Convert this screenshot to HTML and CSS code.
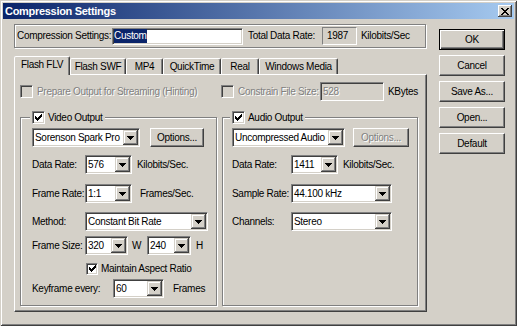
FILE: index.html
```html
<!DOCTYPE html>
<html>
<head>
<meta charset="utf-8">
<title>Compression Settings</title>
<link rel="stylesheet" href="styles.css">
</head>
<body>
<div class="window">
  <div class="titlebar">
    <span class="title">Compression Settings</span>
    <span class="close"><svg width="8" height="7" viewBox="0 0 8 7" shape-rendering="crispEdges"><path fill="#000" d="M0 0h2v1H0zM6 0h2v1H6zM1 1h2v1H1zM5 1h2v1H5zM2 2h4v1H2zM3 3h2v1H3zM2 4h4v1H2zM1 5h2v1H1zM5 5h2v1H5zM0 6h2v1H0zM6 6h2v1H6z"/></svg></span>
  </div>
  <div class="client">
    <div class="main">
      <div class="topbox">
        <span class="lbl-name">Compression Settings:</span>
        <span class="field field-name"><span class="sel">Custom</span></span>
        <span class="lbl-total">Total Data Rate:</span>
        <span class="static">1987</span>
        <span class="lbl-kbps">Kilobits/Sec</span>
      </div>
      <div class="tabs">
        <div class="tab active t-flv">Flash FLV</div>
        <div class="tab t-swf">Flash SWF</div>
        <div class="tab t-mp4">MP4</div>
        <div class="tab t-qt">QuickTime</div>
        <div class="tab t-real">Real</div>
        <div class="tab t-wm">Windows Media</div>
      </div>
      <div class="panel">
        <div class="row1">
          <div class="check disabled opt-stream"><span class="box"></span><span>Prepare Output for Streaming (Hinting)</span></div>
          <div class="check disabled"><span class="box"></span><span class="w-constrain">Constrain File Size:</span></div>
          <span class="field field-size disabled">528</span>
          <span class="lbl-kbytes">KBytes</span>
        </div>
        <div class="groups">
          <fieldset class="group group-video">
            <legend><span class="box"><svg width="7" height="7" viewBox="0 0 7 7" shape-rendering="crispEdges"><path fill="#000" d="M6 0h1v3H6zM5 1h1v3H5zM0 2h1v3H0zM4 2h1v3H4zM1 3h1v3H1zM3 3h1v3H3zM2 4h1v3H2z"/></svg></span><span>Video Output</span></legend>
            <div class="frow">
              <div class="combo w108"><span class="combo-text">Sorenson Spark Pro</span><span class="drop"><svg width="7" height="4" viewBox="0 0 7 4" shape-rendering="crispEdges"><path fill="#000" d="M0 0h7v1H0zM1 1h5v1H1zM2 2h3v1H2zM3 3h1v1H3z"/></svg></span></div>
              <div class="btn btn-opt ml10">Options...</div>
            </div>
            <div class="frow mt8">
              <span class="flabel">Data Rate:</span>
              <div class="combo w47"><span class="combo-text">576</span><span class="drop"><svg width="7" height="4" viewBox="0 0 7 4" shape-rendering="crispEdges"><path fill="#000" d="M0 0h7v1H0zM1 1h5v1H1zM2 2h3v1H2zM3 3h1v1H3z"/></svg></span></div>
              <span class="ml5">Kilobits/Sec.</span>
            </div>
            <div class="frow mt10">
              <span class="flabel">Frame Rate:</span>
              <div class="combo w47"><span class="combo-text">1:1</span><span class="drop"><svg width="7" height="4" viewBox="0 0 7 4" shape-rendering="crispEdges"><path fill="#000" d="M0 0h7v1H0zM1 1h5v1H1zM2 2h3v1H2zM3 3h1v1H3z"/></svg></span></div>
              <span class="ml8">Frames/Sec.</span>
            </div>
            <div class="frow mt9">
              <span class="flabel">Method:</span>
              <div class="combo w123"><span class="combo-text">Constant Bit Rate</span><span class="drop"><svg width="7" height="4" viewBox="0 0 7 4" shape-rendering="crispEdges"><path fill="#000" d="M0 0h7v1H0zM1 1h5v1H1zM2 2h3v1H2zM3 3h1v1H3z"/></svg></span></div>
            </div>
            <div class="frow mt5">
              <span class="flabel">Frame Size:</span>
              <div class="combo w43"><span class="combo-text">320</span><span class="drop"><svg width="7" height="4" viewBox="0 0 7 4" shape-rendering="crispEdges"><path fill="#000" d="M0 0h7v1H0zM1 1h5v1H1zM2 2h3v1H2zM3 3h1v1H3z"/></svg></span></div>
              <span class="unit-w">W</span>
              <div class="combo w44"><span class="combo-text">240</span><span class="drop"><svg width="7" height="4" viewBox="0 0 7 4" shape-rendering="crispEdges"><path fill="#000" d="M0 0h7v1H0zM1 1h5v1H1zM2 2h3v1H2zM3 3h1v1H3z"/></svg></span></div>
              <span class="ml5">H</span>
            </div>
            <div class="frow frow-check mt7">
              <div class="check check-small"><span class="box"><svg width="7" height="7" viewBox="0 0 7 7" shape-rendering="crispEdges"><path fill="#000" d="M6 0h1v3H6zM5 1h1v3H5zM0 2h1v3H0zM4 2h1v3H4zM1 3h1v3H1zM3 3h1v3H3zM2 4h1v3H2z"/></svg></span><span>Maintain Aspect Ratio</span></div>
            </div>
            <div class="frow mt4">
              <span class="flabel flabel-key">Keyframe every:</span>
              <div class="combo w51"><span class="combo-text">60</span><span class="drop"><svg width="7" height="4" viewBox="0 0 7 4" shape-rendering="crispEdges"><path fill="#000" d="M0 0h7v1H0zM1 1h5v1H1zM2 2h3v1H2zM3 3h1v1H3z"/></svg></span></div>
              <span class="ml9">Frames</span>
            </div>
          </fieldset>
          <fieldset class="group group-audio">
            <legend><span class="box"><svg width="7" height="7" viewBox="0 0 7 7" shape-rendering="crispEdges"><path fill="#000" d="M6 0h1v3H6zM5 1h1v3H5zM0 2h1v3H0zM4 2h1v3H4zM1 3h1v3H1zM3 3h1v3H3zM2 4h1v3H2z"/></svg></span><span>Audio Output</span></legend>
            <div class="frow">
              <div class="combo w113"><span class="combo-text">Uncompressed Audio</span><span class="drop"><svg width="7" height="4" viewBox="0 0 7 4" shape-rendering="crispEdges"><path fill="#000" d="M0 0h7v1H0zM1 1h5v1H1zM2 2h3v1H2zM3 3h1v1H3z"/></svg></span></div>
              <div class="btn btn-opt btn-opt-audio disabled ml8">Options...</div>
            </div>
            <div class="frow mt8">
              <span class="flabel flabel-audio">Data Rate:</span>
              <div class="combo w47"><span class="combo-text">1411</span><span class="drop"><svg width="7" height="4" viewBox="0 0 7 4" shape-rendering="crispEdges"><path fill="#000" d="M0 0h7v1H0zM1 1h5v1H1zM2 2h3v1H2zM3 3h1v1H3z"/></svg></span></div>
              <span class="ml5">Kilobits/Sec.</span>
            </div>
            <div class="frow mt10">
              <span class="flabel flabel-audio">Sample Rate:</span>
              <div class="combo w101"><span class="combo-text">44.100 kHz</span><span class="drop"><svg width="7" height="4" viewBox="0 0 7 4" shape-rendering="crispEdges"><path fill="#000" d="M0 0h7v1H0zM1 1h5v1H1zM2 2h3v1H2zM3 3h1v1H3z"/></svg></span></div>
            </div>
            <div class="frow mt9">
              <span class="flabel flabel-audio">Channels:</span>
              <div class="combo w101"><span class="combo-text">Stereo</span><span class="drop"><svg width="7" height="4" viewBox="0 0 7 4" shape-rendering="crispEdges"><path fill="#000" d="M0 0h7v1H0zM1 1h5v1H1zM2 2h3v1H2zM3 3h1v1H3z"/></svg></span></div>
            </div>
          </fieldset>
        </div>
      </div>
    </div>
    <div class="buttons">
      <div class="btn btn-default">OK</div>
      <div class="btn">Cancel</div>
      <div class="btn">Save As...</div>
      <div class="btn">Open...</div>
      <div class="btn">Default</div>
    </div>
  </div>
</div>
</body>
</html>
```

FILE: styles.css
```css
* { box-sizing: border-box; }
html, body { margin: 0; padding: 0; }
body {
  font: 10px/1 "Liberation Sans", Arial, sans-serif;
  letter-spacing: -0.3px;
  color: #000;
  background: #d4d0c8;
}

.window {
  width: 517px;
  height: 326px;
  padding: 3px;
  background: #d4d0c8;
  box-shadow: inset 1px 1px #d4d0c8, inset -1px -1px #404040, inset 2px 2px #fff, inset -2px -2px #808080;
}

.titlebar {
  height: 16px;
  display: flex;
  align-items: center;
  justify-content: space-between;
  padding: 0 2px;
  background: linear-gradient(to right, #0a246a, #a6caf0);
}
.title {
  color: #fff;
  font-weight: bold;
  font-size: 11px;
  letter-spacing: -0.3px;
}
.close {
  width: 14px;
  height: 12px;
  display: flex;
  align-items: center;
  justify-content: center;
  background: #d4d0c8;
  box-shadow: inset -1px -1px #404040, inset 1px 1px #fff, inset -2px -2px #808080;
}

.client {
  display: flex;
  padding: 5px 0 0 11px;
}
.main { width: 413px; }

/* top settings strip */
.topbox {
  width: 412px;
  height: 24px;
  display: flex;
  align-items: center;
  padding-left: 2px;
  border: 1px solid #808080;
  box-shadow: inset 1px 1px #fff, 1px 1px #fff;
}
.lbl-name { width: 95px; white-space: nowrap; }
.field {
  height: 17px;
  display: flex;
  align-items: center;
  background: #fff;
  border: 1px solid;
  border-color: #808080 #fff #fff #808080;
  box-shadow: inset 1px 1px #404040, inset -1px -1px #d4d0c8;
  padding-left: 1px;
  flex: none;
}
.field-name { width: 131px; }
.sel {
  background: #0a246a;
  color: #fff;
  padding: 2px 0;
}
.lbl-total { margin-left: 5px; width: 74px; white-space: nowrap; }
.static {
  width: 35px;
  height: 18px;
  display: flex;
  align-items: center;
  padding-left: 4px;
  border: 1px solid;
  border-color: #808080 #fff #fff #808080;
}
.lbl-kbps { margin-left: 4px; white-space: nowrap; }

/* tabs */
.tabs {
  display: flex;
  align-items: flex-end;
  height: 18px;
  margin-top: 8px;
}
.tab {
  height: 16px;
  display: flex;
  align-items: center;
  justify-content: center;
  white-space: nowrap;
  border: 1px solid;
  border-bottom: 0;
  border-color: #fff #404040 transparent #fff;
  box-shadow: inset -1px 0 #808080;
  border-radius: 2px 2px 0 0;
  background: #d4d0c8;
}
.tab.active {
  height: 19px;
  margin-bottom: -1px;
  position: relative;
  z-index: 1;
  padding-bottom: 2px;
}
.t-flv { width: 56px; }
.t-swf { width: 56px; }
.t-mp4 { width: 37px; }
.t-qt { width: 58px; }
.t-real { width: 38px; }
.t-wm { width: 79px; }

.panel {
  height: 238px;
  border: 1px solid;
  border-color: #fff #404040 #404040 #fff;
  box-shadow: inset -1px -1px #808080;
  padding: 7px 0 0 5px;
}
.row1 {
  display: flex;
  align-items: center;
  height: 19px;
}
.opt-stream { width: 201px; }
.w-constrain { width: 82px; white-space: nowrap; }
.field-size {
  width: 64px;
  height: 19px;
  background: #d4d0c8;
  padding-left: 2px;
}
.lbl-kbytes { margin-left: 4px; }

/* checkboxes */
.check {
  display: flex;
  align-items: center;
  gap: 4px;
  white-space: nowrap;
}
.box {
  width: 13px;
  height: 13px;
  flex: none;
  display: flex;
  align-items: center;
  justify-content: center;
  background: #fff;
  border: 1px solid;
  border-color: #808080 #fff #fff #808080;
  box-shadow: inset 1px 1px #404040, inset -1px -1px #d4d0c8;
}
.disabled { color: #808080; text-shadow: 1px 1px #fff; }
.disabled .box { background: #d4d0c8; }

/* group boxes */
.groups {
  display: flex;
  gap: 5px;
  margin-top: 10px;
}
.group {
  margin: 0;
  min-width: 0;
  height: 195px;
  border: 1px solid #808080;
  box-shadow: inset 1px 1px #fff, 1px 1px #fff;
  padding: 4px 0 0 11px;
}
.group-video { width: 197px; }
.group-audio { width: 196px; padding-left: 9px; }
.group legend {
  height: 13px;
  display: flex;
  align-items: center;
  gap: 3px;
  padding: 0 2px;
  margin-left: -2px;
  background: #d4d0c8;
  white-space: nowrap;
}

.frow {
  display: flex;
  align-items: center;
  height: 19px;
  white-space: nowrap;
}
.frow-check { height: 13px; padding-left: 54px; }
.check-small { gap: 3px; }
.check-small .box { width: 12px; height: 12px; }

.mt4 { margin-top: 4px; }
.mt5 { margin-top: 5px; }
.mt7 { margin-top: 7px; }
.mt8 { margin-top: 8px; }
.mt9 { margin-top: 9px; }
.mt10 { margin-top: 10px; }
.ml5 { margin-left: 5px; }
.ml8 { margin-left: 8px; }
.ml9 { margin-left: 9px; }
.ml10 { margin-left: 10px; }

.flabel { width: 53px; flex: none; }
.flabel-audio { width: 59px; }
.flabel-key { width: 81px; }
.unit-w { margin-left: 4px; width: 15px; flex: none; }

/* combo boxes */
.combo {
  height: 19px;
  display: flex;
  align-items: center;
  flex: none;
  padding: 1px;
  background: #fff;
  border: 1px solid;
  border-color: #808080 #fff #fff #808080;
  box-shadow: inset 1px 1px #404040, inset -1px -1px #d4d0c8;
}
.combo-text {
  flex: 1;
  min-width: 0;
  overflow: hidden;
  white-space: nowrap;
  padding-left: 1px;
}
.drop {
  width: 15px;
  height: 15px;
  flex: none;
  display: flex;
  align-items: center;
  justify-content: center;
  background: #d4d0c8;
  box-shadow: inset -1px -1px #404040, inset 1px 1px #d4d0c8, inset -2px -2px #808080, inset 2px 2px #fff;
}
.w43 { width: 43px; }
.w44 { width: 44px; }
.w47 { width: 47px; }
.w51 { width: 51px; }
.w101 { width: 101px; }
.w108 { width: 108px; }
.w113 { width: 113px; }
.w123 { width: 123px; }

/* buttons */
.buttons {
  margin: 5px 0 0 12px;
  display: flex;
  flex-direction: column;
  gap: 5px;
}
.btn {
  width: 66px;
  height: 21px;
  display: flex;
  align-items: center;
  justify-content: center;
  white-space: nowrap;
  background: #d4d0c8;
  border: 1px solid;
  border-color: #fff #404040 #404040 #fff;
  box-shadow: inset -1px -1px #808080;
}
.btn-default {
  border: 1px solid #000;
  box-shadow: inset 1px 1px #fff, inset -1px -1px #404040, inset -2px -2px #808080;
}
.btn-opt { width: 54px; height: 19px; }
.btn-opt-audio { width: 56px; }
```
